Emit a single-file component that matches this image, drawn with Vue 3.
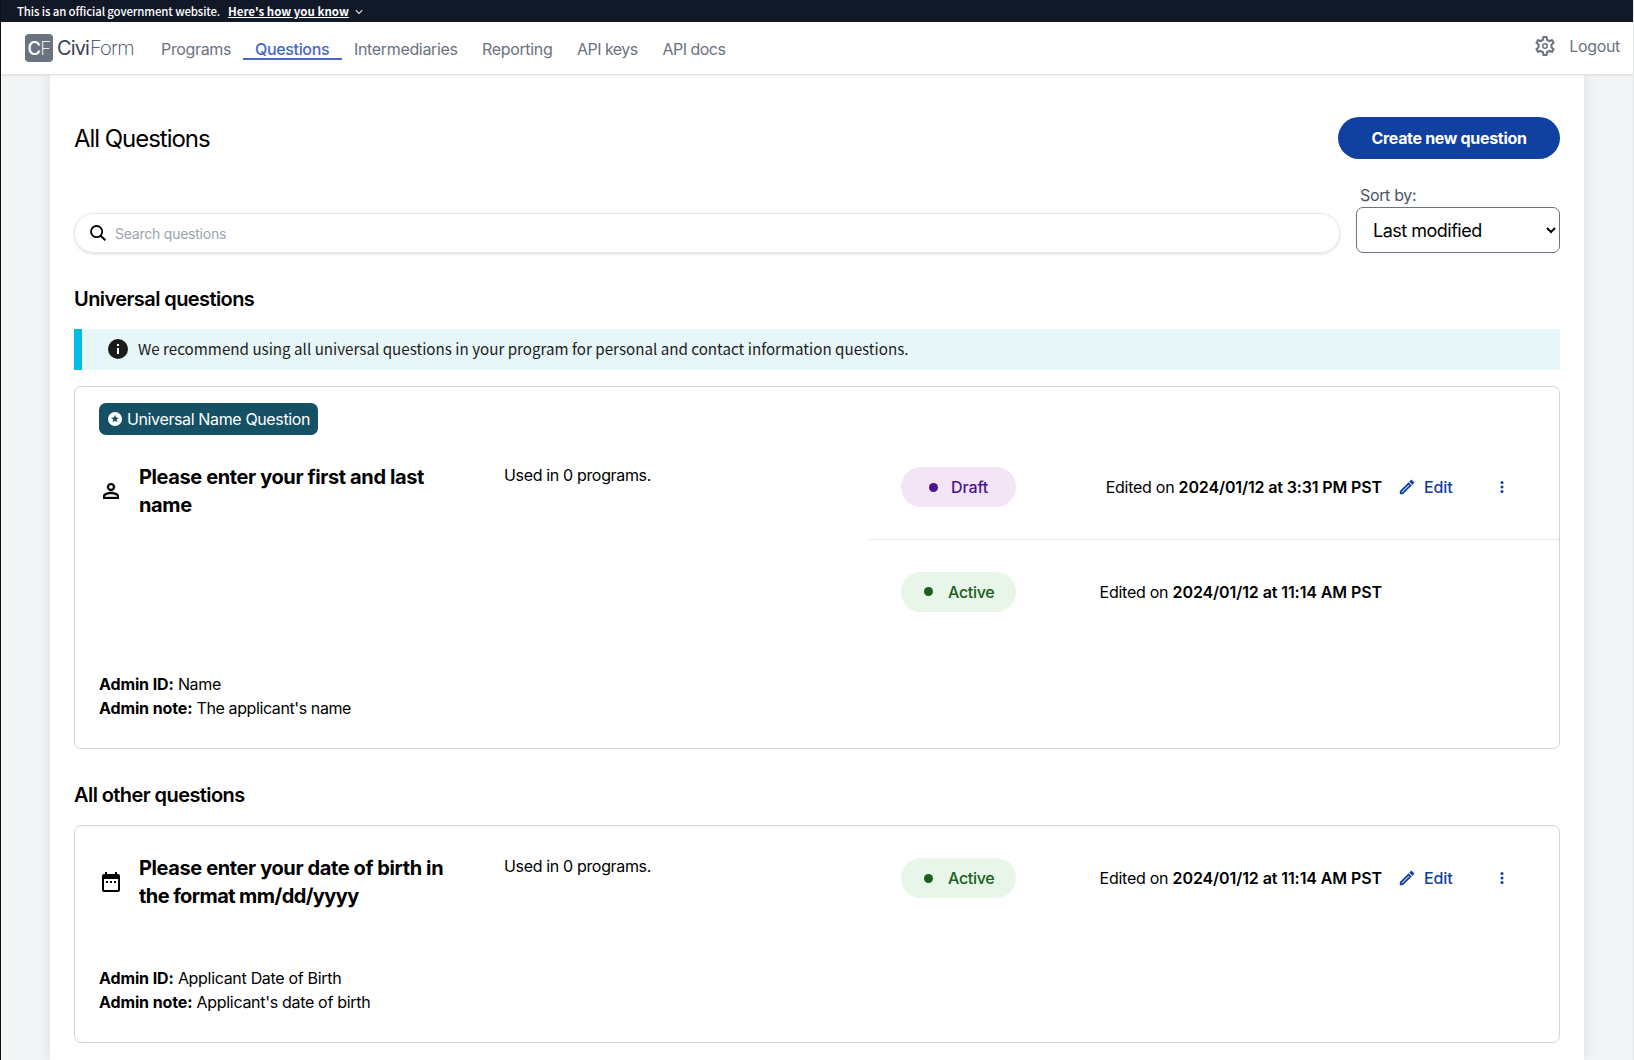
<script setup>
const navLinks = [
  { label: 'Programs', cls: 'programs' },
  { label: 'Questions', cls: 'questions' },
  { label: 'Intermediaries', cls: 'intermediaries' },
  { label: 'Reporting', cls: 'reporting' },
  { label: 'API keys', cls: 'keys' },
  { label: 'API docs', cls: 'docs' },
]

const sections = [
  {
    title: 'Universal questions',
    alert: 'We recommend using all universal questions in your program for personal and contact information questions.',
    question: {
      kind: 'name',
      badge: 'Universal Name Question',
      lines: ['Please enter your first and last', 'name'],
      adminId: 'Name',
      adminNote: "The applicant's name",
      versions: [
        { status: 'Draft', edited: '2024/01/12 at 3:31 PM PST', editable: true },
        { status: 'Active', edited: '2024/01/12 at 11:14 AM PST', editable: false },
      ],
    },
  },
  {
    title: 'All other questions',
    question: {
      kind: 'date',
      lines: ['Please enter your date of birth in', 'the format mm/dd/yyyy'],
      adminId: 'Applicant Date of Birth',
      adminNote: "Applicant's date of birth",
      versions: [{ status: 'Active', edited: '2024/01/12 at 11:14 AM PST', editable: true }],
    },
  },
]
</script>

<template>
  <div class="page">
    <div class="banner">
      <span class="banner-text">This is an official government website.</span>
      <a class="banner-link">Here's how you know</a>
      <svg class="chevron" viewBox="0 0 8 6"><path d="M0.7 1.2 4 4.4 7.3 1.2" fill="none" stroke="#e5e7eb" stroke-width="1.1" /></svg>
    </div>

    <header class="header">
      <div class="logo">
        <span class="mark"><b>C</b><i>F</i></span>
        <span class="word"><b>Civi</b><i>Form</i></span>
      </div>
      <nav class="nav">
        <a v-for="link in navLinks" :key="link.label" :class="['nav-link', link.cls]">{{ link.label }}</a>
      </nav>
      <div class="account">
        <svg class="gear" viewBox="2 2 20 20"><path fill="#6b7280" d="M19.43 12.98c.04-.32.07-.64.07-.98 0-.34-.03-.66-.07-.98l2.11-1.65c.19-.15.24-.42.12-.64l-2-3.46c-.09-.16-.26-.25-.44-.25-.06 0-.12.01-.17.03l-2.49 1c-.52-.4-1.08-.73-1.69-.98l-.38-2.65C14.46 2.18 14.25 2 14 2h-4c-.25 0-.46.18-.49.42l-.38 2.65c-.61.25-1.17.59-1.69.98l-2.49-1c-.06-.02-.12-.03-.18-.03-.17 0-.34.09-.43.25l-2 3.46c-.13.22-.07.49.12.64l2.11 1.65c-.04.32-.07.65-.07.98 0 .33.03.66.07.98l-2.11 1.65c-.19.15-.24.42-.12.64l2 3.46c.09.16.26.25.44.25.06 0 .12-.01.17-.03l2.49-1c.52.4 1.08.73 1.69.98l.38 2.65c.03.24.24.42.49.42h4c.25 0 .46-.18.49-.42l.38-2.65c.61-.25 1.17-.59 1.69-.98l2.49 1c.06.02.12.03.18.03.17 0 .34-.09.43-.25l2-3.46c.12-.22.07-.49-.12-.64l-2.11-1.65zm-1.98-1.71c.04.31.05.52.05.73 0 .21-.02.43-.05.73l-.14 1.13.89.7 1.08.84-.7 1.21-1.27-.51-1.04-.42-.9.68c-.43.32-.84.56-1.25.73l-1.06.43-.16 1.13-.2 1.35h-1.4l-.19-1.35-.16-1.13-1.06-.43c-.43-.18-.83-.41-1.23-.71l-.91-.7-1.06.43-1.27.51-.7-1.21 1.08-.84.89-.7-.14-1.13c-.03-.31-.05-.54-.05-.74s.02-.43.05-.73l.14-1.13-.89-.7-1.08-.84.7-1.21 1.27.51 1.04.42.9-.68c.43-.32.84-.56 1.25-.73l1.06-.43.16-1.13.2-1.35h1.39l.19 1.35.16 1.13 1.06.43c.43.18.83.41 1.23.71l.91.7 1.06-.43 1.27-.51.7 1.21-1.07.85-.89.7.14 1.13zM12 9a3 3 0 1 0 0 6 3 3 0 0 0 0-6zm0 4.500a1.500 1.500 0 1 1 0-3 1.500 1.500 0 0 1 0 3z" /></svg>
        <a class="logout">Logout</a>
      </div>
    </header>

    <main class="main">
      <div class="title-row">
        <h1>All Questions</h1>
        <button class="create">Create new question</button>
      </div>

      <div class="filters">
        <label class="search">
          <svg class="magnifier" viewBox="0 0 16 16"><circle cx="6.6" cy="6.6" r="5.6" fill="none" stroke="#000" stroke-width="1.8" /><path d="m10.7 10.7 4.6 4.6" stroke="#000" stroke-width="2" /></svg>
          <input placeholder="Search questions" />
        </label>
        <div class="sort">
          <label for="sort">Sort by:</label>
          <select id="sort"><option>Last modified</option></select>
        </div>
      </div>

      <section v-for="section in sections" :key="section.title">
        <h2>{{ section.title }}</h2>
        <div v-if="section.alert" class="alert">
          <svg class="info" viewBox="0 0 20 20"><circle cx="10" cy="10" r="10" fill="#1b1b1b" /><path d="M9 5h2v2H9zM9 9h2v6H9z" fill="#fff" /></svg>
          <span>{{ section.alert }}</span>
        </div>
        <article :class="['card', section.question.kind]">
          <div v-if="section.question.badge" class="badge">
            <svg viewBox="2 2 20 20"><path fill="#fff" fill-rule="evenodd" d="M12 2a10 10 0 1 0 0 20 10 10 0 0 0 0-20zm3.500 14.700L12 14.600l-3.500 2.100.93-3.970-3.080-2.670 4.060-.34L12 6l1.590 3.720 4.060.34-3.080 2.670z" /></svg>
            <span>{{ section.question.badge }}</span>
          </div>
          <div class="body">
            <div class="prompt">
              <svg v-if="section.question.kind === 'name'" class="icon-person" viewBox="4 4 16 16"><path stroke="#000" stroke-width=".4" d="M12 5.900a2.100 2.100 0 1 1 0 4.200 2.100 2.100 0 0 1 0-4.200m0 9c2.970 0 6.100 1.460 6.100 2.100v1.100H5.900V17c0-.640 3.130-2.100 6.100-2.100M12 4C9.790 4 8 5.790 8 8s1.790 4 4 4 4-1.790 4-4-1.790-4-4-4zm0 9c-2.670 0-8 1.340-8 4v3h16v-3c0-2.660-5.330-4-8-4z" /></svg>
              <svg v-else class="icon-date" viewBox="3 2 18 20"><path d="M7 11h2v2H7v-2zm14-5v14c0 1.100-.900 2-2 2H5c-1.110 0-2-.900-2-2l.010-14c0-1.100.880-2 1.990-2h1V2h2v2h8V2h2v2h1c1.100 0 2 .900 2 2zM5 20h14V9H5v11zm10-7h2v-2h-2v2zm-4 0h2v-2h-2v2z" /><path d="M4 6h16v3H4z" /></svg>
              <h3><span v-for="line in section.question.lines" :key="line">{{ line }}</span></h3>
            </div>
            <p class="used">Used in 0 programs.</p>
            <div class="versions">
              <div v-for="v in section.question.versions" :key="v.status" :class="['version', 'is-' + v.status.toLowerCase()]">
                <span :class="['pill', v.status.toLowerCase()]"><em></em>{{ v.status }}</span>
                <p class="edited">Edited on <b>{{ v.edited }}</b></p>
                <div class="actions">
                  <template v-if="v.editable">
                    <svg class="pencil" viewBox="3 3 18 18"><path fill="#1040a0" stroke="#1040a0" stroke-width=".5" d="m14.060 9.020.920.920L5.920 19H5v-.920l9.060-9.060M17.660 3c-.250 0-.510.100-.700.290l-1.830 1.830 3.750 3.750 1.830-1.830c.390-.390.390-1.020 0-1.410l-2.340-2.340c-.200-.200-.450-.290-.710-.290zm-3.600 3.190L3 17.250V21h3.750L17.810 9.940l-3.750-3.750z" /></svg>
                    <span class="edit">Edit</span>
                    <svg class="dots" viewBox="0 0 4 12"><circle cx="2" cy="1.600" r="1.500" /><circle cx="2" cy="6" r="1.500" /><circle cx="2" cy="10.400" r="1.500" /></svg>
                  </template>
                </div>
              </div>
            </div>
          </div>
          <div class="admin">
            <p class="admin-id"><b>Admin ID:</b> <span>{{ section.question.adminId }}</span></p>
            <p class="admin-note"><b>Admin note:</b> <span>{{ section.question.adminNote }}</span></p>
          </div>
        </article>
      </section>
    </main>
  </div>
</template>

<style>
body { overflow: hidden; }
</style>

<style scoped>
* { box-sizing: border-box; margin: 0; padding: 0; }
.page {
  height: 1060px; overflow: hidden; display: flex; flex-direction: column;
  background: #f3f4f6; border-left: 1px solid #111; border-right: 1px solid #e2e3e5;
  font: 400 16px/24px Inter, "Open Sans", sans-serif; letter-spacing: -0.34px; color: #000;
}
.banner {
  flex: none; height: 22px; background: #111827; color: #fff; display: flex; align-items: center; padding-left: 16px;
  font: 400 11.43px/24px "Noto Sans CJK SC", sans-serif; letter-spacing: 0; white-space: nowrap;
}
.banner-text { font-weight: 500; letter-spacing: -0.13px; }
.banner-link { font-size: 11.5px; font-weight: 700; margin-left: 8px; text-decoration: underline; }
.chevron { width: 8px; height: 6px; margin: 2px 0 0 6px; }

.header {
  flex: none; height: 53px; position: relative; z-index: 1; display: flex; align-items: flex-start; background: #fff;
  border-bottom: 1px solid #e3e4e6; box-shadow: 0 1px 2px rgba(0, 0, 0, .06);
}
.logo { width: 108px; display: flex; align-items: center; margin: 12px 0 0 24px; }
.mark {
  flex: none; width: 28px; height: 28px; border-radius: 4px; background: #6b7280; color: #fff; display: flex; align-items: center; justify-content: center;
  font-size: 18.5px; letter-spacing: -0.6px;
}
.mark b { font-weight: 500; }
.mark i, .word i { font-style: normal; font-weight: 200; }
.word { margin-left: 4px; display: flex; font-size: 20px; color: #374151; }
.word b { font-weight: 400; letter-spacing: -0.9px; }
.word i { letter-spacing: -0.8px; margin-left: 1px; }
.nav { display: flex; margin: 16px 0 0 16px; }
.nav-link { height: 22px; line-height: 23px; padding: 0 12px; color: #6b7280; white-space: nowrap; }
.programs { width: 94px; }
.questions { width: 99px; color: #4569c4; font-weight: 500; border-bottom: 2px solid #4569c4; }
.intermediaries { width: 128px; }
.reporting { width: 95px; }
.keys { width: 85.5px; letter-spacing: -0.53px; }
.docs { letter-spacing: -0.53px; }
.account { margin: 12px 13px 0 auto; display: flex; align-items: center; color: #6b7280; }
.gear { width: 20px; height: 20px; margin-right: 14px; }

.main {
  flex: 1; margin: 0 49px; padding: 42px 24px 0; background: #fff; box-shadow: 0 0 14px rgba(0, 0, 0, .1);
}
.title-row { display: flex; justify-content: space-between; align-items: center; height: 42px; }
h1 { padding-top: 2px; font-size: 24px; font-weight: 400; letter-spacing: -1.04px; }
.create {
  width: 222px; height: 42px; border: 0; border-radius: 21px; background: #1040a0; color: #fff; font: inherit; font-weight: 700; letter-spacing: -0.315px;
}
.filters { margin-top: 24px; height: 70px; display: flex; align-items: flex-end; gap: 16px; }
.search {
  flex: 1; height: 40px; border: 1px solid #e5e7eb; border-radius: 20px; display: flex; align-items: center; padding-left: 15px;
  box-shadow: 0 1px 3px rgba(0, 0, 0, .14);
}
.magnifier { width: 16px; height: 16px; margin-right: 9px; }
input { flex: 1; padding-top: 2px; border: 0; outline: 0; background: none; font: inherit; font-size: 14px; letter-spacing: -0.23px; }
input::placeholder { color: #9ca3af; opacity: 1; }
.sort { width: 204px; display: flex; flex-direction: column; }
.sort label { margin-left: 4px; color: #4b5563; letter-spacing: -0.34px; }
select {
  width: 204px; height: 46px; border: 1px solid #6b7280; border-radius: 7px; background: #fff; color: #000; padding-left: 12px;
  font: inherit; font-size: 18px; letter-spacing: -0.5px;
}
h2 { height: 28px; margin: 32px 0 16px; font-size: 20px; line-height: 28px; font-weight: 600; letter-spacing: -0.58px; }
.alert {
  height: 41px; margin-bottom: 16px; border-left: 8px solid #00bde3; background: #e7f6f8; display: flex; align-items: center; padding: 0 0 2px 26px;
  font: 400 15.18px/24px "Noto Sans CJK SC", sans-serif; letter-spacing: 0; color: #1b1b1b; white-space: nowrap;
}
.alert span { padding-bottom: 2px; }
.info { width: 20px; height: 20px; margin-right: 10px; }

.card { border: 1px solid #d1d5db; border-radius: 7px; padding-left: 24px; }
.card.name { height: 363px; padding-top: 16px; }
.card.date { height: 218px; }
.badge { width: 219px; height: 32px; border-radius: 7px; background: #155064; color: #fff; display: flex; align-items: center; padding-left: 9px; letter-spacing: -0.37px; white-space: nowrap; }
.badge svg { width: 14px; height: 14px; margin-right: 5px; }
.body { display: flex; align-items: flex-start; }
.name .body { height: 237px; }
.date .body { height: 140px; }
.prompt { width: 405px; display: flex; align-items: center; padding-top: 28px; }
h3 { font-size: 20px; line-height: 28px; font-weight: 700; letter-spacing: -0.39px; }
h3 span { display: block; white-space: nowrap; }
.date h3 span:last-child { letter-spacing: -0.58px; }
.icon-person { width: 16px; height: 16px; margin: 0 20px 1px 4px; }
.icon-date { width: 18px; height: 20px; margin: 0 19px 1px 3px; }
.used { width: 365px; padding-top: 28px; }
.versions { flex: 1; }
.version { height: 104px; display: flex; align-items: center; padding-left: 32px; }
.version + .version { border-top: 1px solid #e5e7eb; }
.pill { width: 115px; height: 40px; border-radius: 20px; display: flex; align-items: center; padding-left: 28px; font-weight: 500; letter-spacing: -0.1px; }
.pill em { width: 9px; height: 9px; border-radius: 50%; background: currentColor; margin-right: 13px; }
.pill.draft { background: #f3e5f5; color: #4a148c; }
.pill.active { background: #e8f5e9; color: #1b5e20; padding-left: 23px; letter-spacing: -0.3px; }
.pill.active em { margin-right: 15px; }
.edited { margin-left: auto; letter-spacing: -0.26px; white-space: nowrap; }
.edited b { font-weight: 600; letter-spacing: -0.13px; }
.is-active .edited b { letter-spacing: -0.09px; }
.actions { width: 177px; display: flex; align-items: center; padding-left: 18px; color: #1040a0; }
.pencil { width: 14px; height: 14px; margin-right: 10px; overflow: visible; }
.edit { width: 76px; font-weight: 500; letter-spacing: -0.1px; }
.dots { width: 4px; height: 12px; fill: #1040a0; }
.admin b { font-weight: 700; letter-spacing: -0.12px; }
.admin p { letter-spacing: -0.31px; }
.name .admin-note span { letter-spacing: -0.4px; }
</style>
